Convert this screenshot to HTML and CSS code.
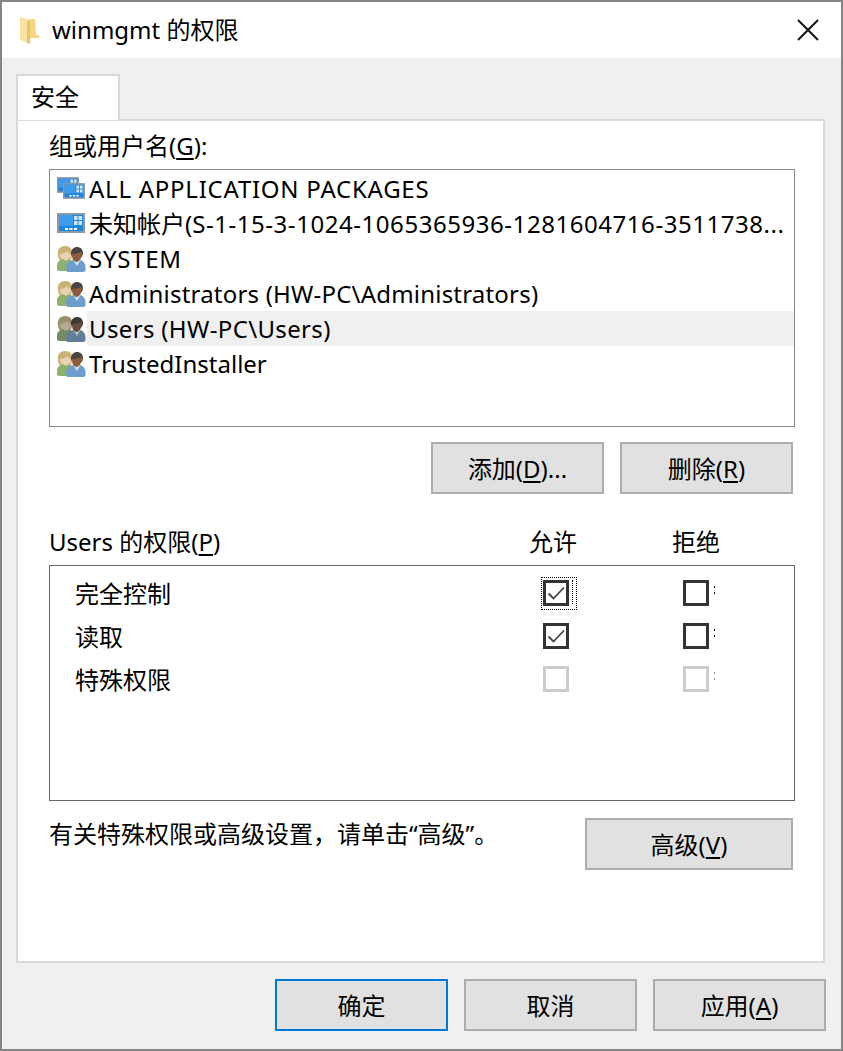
FILE: index.html
```html
<!DOCTYPE html>
<html lang="zh-CN">
<head>
    <meta charset="UTF-8">
    <title>winmgmt 的权限</title>
    <link rel="stylesheet" href="styles.css">
</head>
<body>
    <svg class="defs" width="0" height="0">
        <symbol id="people" viewBox="0 0 30 26">
            <path d="M2 9c-1-5 2-9 7-9s8 3 7 9c0 3-1 5-3 6H5C3 14 2 12 2 9z" fill="#c9b274"/>
            <path d="M4 8c2 0 6-1 7-3 1 2 3 3 4 3 0 4-2.500 7-5.500 7S4 12 4 8z" fill="#e8d2b4"/>
            <path d="M1 24v-5c0-3 3-5 6-6l3 2 3-2 3 2v7l-4 3H3z" fill="#8fb06a"/>
            <path d="M15 8c0-5 3-7 6-7s6 2 6 6c0 2-1 3-1 4h-9c-1-1-2-2-2-3z" fill="#4a4442"/>
            <path d="M16 8c2 0 7-1 10-2 0 6-2.500 10-5.500 10S16 13 16 8z" fill="#8b5d3e"/>
            <path d="M11 26l-1-5c0-3 3-6 7-7l3.500 3 4-3c3 1 5 4 5 7v4l-2 1z" fill="#6d9fcc"/>
            <path d="M17 14l3.500 3 4-3-3.500 6z" fill="#d6e5f1"/>
        </symbol>
        <symbol id="appwin" viewBox="0 0 28 20">
            <rect x="1" y="1" width="26" height="18" fill="#1f86de" stroke="#8c9aa6" stroke-width="2"/>
            <path d="M2 2h14v11H2z" fill="#3f9cec"/>
            <path d="M17 3h3.500v4H17zM21.500 3H25v4h-3.500zM17 8h3.500v4H17zM21.500 8H25v4h-3.500z" fill="#cfe6f9"/>
            <path d="M8 15h3v2H8zM12.500 15h3v2h-3zM17 15h3v2h-3z" fill="#fff"/>
        </symbol>
        <symbol id="check" viewBox="0 0 20 20">
            <path d="M2.500 10.500l5 5L18 4.500" fill="none" stroke="#444" stroke-width="1.800"/>
        </symbol>
    </svg>

    <div class="dialog">
        <div class="titlebar">
            <svg class="folder" width="20" height="28" viewBox="0 0 20 28">
                <path d="M9 3h6l1 16h3v3H9z" fill="#f6d77f"/>
                <path d="M0 1l10 3v24L0 24z" fill="#f8e3a4"/>
                <path d="M7 4l3 1v23l-3-1z" fill="#eac26a"/>
            </svg>
            <span class="title">winmgmt 的权限</span>
            <svg class="close" width="22" height="22" viewBox="0 0 22 22">
                <path d="M1 1l20 20M21 1L1 21" stroke="#111" stroke-width="2" fill="none"/>
            </svg>
        </div>

        <div class="content">
            <div class="tab">安全</div>
            <div class="panel">
                <div class="list-label">组或用户名(<u>G</u>):</div>
                <div class="listbox">
                    <div class="list-row">
                        <svg class="list-icon" width="30" height="26" viewBox="0 0 30 26">
                            <use href="#appwin" x="1" y="1" width="22" height="16"/>
                            <use href="#appwin" x="7" y="7" width="22" height="16"/>
                        </svg>
                        <span class="list-text track-l">ALL APPLICATION PACKAGES</span>
                    </div>
                    <div class="list-row">
                        <svg class="list-icon" width="30" height="26" viewBox="0 0 30 26">
                            <use href="#appwin" x="1" y="2" width="28" height="20"/>
                        </svg>
                        <span class="list-text">未知帐户(<span class="track-sid">S-1-15-3-1024-1065365936-1281604716-3511738...</span></span>
                    </div>
                    <div class="list-row">
                        <svg class="list-icon" width="30" height="26"><use href="#people"/></svg>
                        <span class="list-text track-l">SYSTEM</span>
                    </div>
                    <div class="list-row">
                        <svg class="list-icon" width="30" height="26"><use href="#people"/></svg>
                        <span class="list-text track-s">Administrators (HW-PC\Administrators)</span>
                    </div>
                    <div class="list-row selected">
                        <svg class="list-icon dim" width="30" height="26"><use href="#people"/></svg>
                        <span class="list-text track-m">Users (HW-PC\Users)</span>
                    </div>
                    <div class="list-row">
                        <svg class="list-icon" width="30" height="26"><use href="#people"/></svg>
                        <span class="list-text">TrustedInstaller</span>
                    </div>
                </div>

                <div class="list-actions">
                    <button class="btn">添加(<u>D</u>)...</button>
                    <button class="btn">删除(<u>R</u>)</button>
                </div>

                <div class="perm-head">
                    <span class="perm-title">Users 的权限(<u>P</u>)</span>
                    <span class="perm-allow">允许</span>
                    <span class="perm-deny">拒绝</span>
                </div>

                <div class="permbox">
                    <div class="perm-row">
                        <span>完全控制</span>
                        <span class="cell"><span class="focus"><span class="box"><svg width="20" height="20"><use href="#check"/></svg></span></span></span>
                        <span class="cell"><span class="box"></span><i class="dots"></i></span>
                    </div>
                    <div class="perm-row">
                        <span>读取</span>
                        <span class="cell"><span class="box"><svg width="20" height="20"><use href="#check"/></svg></span></span>
                        <span class="cell"><span class="box"></span><i class="dots"></i></span>
                    </div>
                    <div class="perm-row">
                        <span>特殊权限</span>
                        <span class="cell"><span class="box off"></span></span>
                        <span class="cell"><span class="box off"></span><i class="dots light"></i></span>
                    </div>
                </div>

                <div class="advanced">
                    <span>有关特殊权限或高级设置，请单击“高级”。</span>
                    <button class="btn btn-wide">高级(<u>V</u>)</button>
                </div>
            </div>
        </div>

        <div class="footer">
            <button class="btn btn-default">确定</button>
            <button class="btn">取消</button>
            <button class="btn">应用(<u>A</u>)</button>
        </div>
    </div>
</body>
</html>
```

FILE: styles.css
```css
html, body {
    margin: 0;
    padding: 0;
    height: 100%;
}

body {
    font-family: "Noto Sans", "Noto Sans CJK SC", sans-serif;
    font-size: 24px;
    color: #000;
    overflow: hidden;
}

u {
    text-underline-offset: 3px;
    text-decoration-thickness: 2px;
}

.defs {
    display: block;
    height: 0;
}

.dialog {
    box-sizing: border-box;
    width: 843px;
    height: 1051px;
    border: 2px solid #858585;
    display: flex;
    flex-direction: column;
    background-color: #f0f0f0;
}

.titlebar {
    height: 56px;
    background-color: #fff;
    display: flex;
    align-items: center;
    padding: 0 22px 0 18px;
}

.folder {
    margin-right: 12px;
}

.title {
    flex: 1;
    padding-bottom: 3px;
}

.close {
    display: block;
}

.content {
    flex: 1;
    padding: 16px 16px 0 14px;
    display: flex;
    flex-direction: column;
}

.tab {
    box-sizing: border-box;
    width: 104px;
    height: 46px;
    margin-bottom: -1px;
    padding-left: 13px;
    line-height: 42px;
    background-color: #fff;
    border: 2px solid #d9d9d9;
    border-bottom: none;
    position: relative;
    z-index: 1;
}

.panel {
    box-sizing: border-box;
    height: 844px;
    background-color: #fff;
    border: 2px solid #d9d9d9;
    padding: 8px 28px 0 31px;
}

.list-label {
    height: 40px;
    line-height: 33px;
}

.listbox {
    box-sizing: border-box;
    height: 258px;
    border: 1px solid #828790;
    padding-top: 1px;
}

.list-row {
    height: 35px;
    display: flex;
    align-items: center;
    padding-left: 6px;
}

.list-icon {
    flex: none;
    margin-right: 1px;
}

.list-icon.dim {
    filter: brightness(.8) saturate(.7);
}

.list-text {
    flex: 1;
    height: 35px;
    line-height: 35px;
    white-space: nowrap;
    padding-left: 2px;
}

.track-s {
    letter-spacing: .2px;
}

.track-m {
    letter-spacing: .35px;
}

.track-l {
    letter-spacing: .75px;
}

.track-sid {
    letter-spacing: .55px;
}

.selected .list-text {
    background-color: #f0f0f0;
}

.list-actions {
    display: flex;
    justify-content: flex-end;
    gap: 16px;
    padding: 15px 2px 0 0;
}

.btn {
    box-sizing: border-box;
    width: 173px;
    height: 52px;
    padding: 0 0 2px;
    font-family: inherit;
    font-size: 24px;
    color: #000;
    background-color: #e1e1e1;
    border: 2px solid #adadad;
}

.btn-wide {
    width: 208px;
}

.btn-default {
    border: 2px solid #0078d7;
}

.perm-head {
    display: flex;
    height: 71px;
    align-items: flex-end;
    line-height: 36px;
    padding-bottom: 5px;
    box-sizing: border-box;
}

.perm-title {
    width: 480px;
}

.perm-allow {
    width: 143px;
}

.permbox {
    box-sizing: border-box;
    height: 236px;
    border: 1px solid #666;
    padding: 5px 0 0 25px;
}

.perm-row {
    height: 43px;
    display: grid;
    grid-template-columns: 411px 140px 140px;
    align-items: center;
}

.cell {
    display: flex;
    justify-content: center;
    align-items: center;
    position: relative;
}

.box {
    box-sizing: border-box;
    width: 26px;
    height: 26px;
    border: 3px solid #333;
    display: flex;
    align-items: center;
    justify-content: center;
    background-color: #fff;
}

.box.off {
    border-color: #ccc;
}

.focus {
    display: flex;
    padding: 3px 8px 4px 2px;
    margin: -3px -6px -4px 0;
    outline: 1px dotted #000;
    outline-offset: -1px;
    position: relative;
}

.focus::after {
    content: "";
    position: absolute;
    right: 3px;
    top: 3px;
    height: 24px;
    width: 1px;
    border-left: 1px dotted #000;
}

.dots {
    position: absolute;
    left: 88px;
    top: calc(50% - 7px);
    width: 1px;
    height: 2px;
    background-color: #000;
    box-shadow: 0 6px 0 #000;
}

.dots.light {
    background-color: #888;
    box-shadow: 0 6px 0 #888;
}

.advanced {
    display: flex;
    justify-content: space-between;
    padding: 17px 2px 0 0;
}

.advanced span {
    line-height: 32px;
}

.footer {
    height: 86px;
    display: flex;
    justify-content: flex-end;
    align-items: flex-start;
    gap: 16px;
    padding: 16px 15px 0 0;
    box-sizing: border-box;
}
```
